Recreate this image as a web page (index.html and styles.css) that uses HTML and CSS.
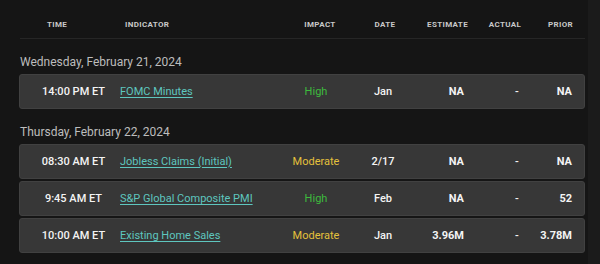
FILE: index.html
```html
<!DOCTYPE html>
<html>
<head>
<meta charset="utf-8">
<link rel="stylesheet" href="styles.css">
</head>
<body>
<div class="page">
  <div class="cal">
    <div class="head">
      <div class="h-time">Time</div>
      <div class="h-ind">Indicator</div>
      <div class="h-imp">Impact</div>
      <div class="h-date">Date</div>
      <div class="h-est">Estimate</div>
      <div class="h-act">Actual</div>
      <div class="h-pri">Prior</div>
    </div>

    <div class="day">Wednesday, February 21, 2024</div>
    <div class="row">
      <div class="c-time">14:00 PM ET</div>
      <div class="c-ind"><a href="#">FOMC Minutes</a></div>
      <div class="c-imp high">High</div>
      <div class="c-date">Jan</div>
      <div class="c-est">NA</div>
      <div class="c-act">-</div>
      <div class="c-pri">NA</div>
    </div>

    <div class="day">Thursday, February 22, 2024</div>
    <div class="row">
      <div class="c-time">08:30 AM ET</div>
      <div class="c-ind"><a href="#">Jobless Claims (Initial)</a></div>
      <div class="c-imp mod">Moderate</div>
      <div class="c-date">2/17</div>
      <div class="c-est">NA</div>
      <div class="c-act">-</div>
      <div class="c-pri">NA</div>
    </div>
    <div class="row">
      <div class="c-time">9:45 AM ET</div>
      <div class="c-ind"><a href="#">S&amp;P Global Composite PMI</a></div>
      <div class="c-imp high">High</div>
      <div class="c-date">Feb</div>
      <div class="c-est">NA</div>
      <div class="c-act">-</div>
      <div class="c-pri">52</div>
    </div>
    <div class="row">
      <div class="c-time">10:00 AM ET</div>
      <div class="c-ind"><a href="#">Existing Home Sales</a></div>
      <div class="c-imp mod">Moderate</div>
      <div class="c-date">Jan</div>
      <div class="c-est">3.96M</div>
      <div class="c-act">-</div>
      <div class="c-pri">3.78M</div>
    </div>
  </div>
  <div class="track"></div>
</div>
</body>
</html>
```

FILE: styles.css
```css
html, body {
  margin: 0;
  padding: 0;
  background: #151515;
  font-family: Roboto, "Liberation Sans", sans-serif;
}
.page {
  display: flex;
  width: 600px;
  height: 264px;
  overflow: hidden;
}
.cal {
  width: 566px;
  margin-left: 19px;
}
.track {
  flex: 1;
  background: #1b1b1b;
  margin-left: 3px;
}
.head {
  display: grid;
  grid-template-columns: 74px 183px 86px 44px 66px 64px 49px;
  height: 39px;
  box-sizing: border-box;
  padding-top: 18px;
  border-bottom: 1px solid #262626;
  margin-left: 1px;
  margin-bottom: 2px;
  font-size: 8px;
  font-weight: 700;
  letter-spacing: 0.35px;
  text-transform: uppercase;
  color: #c8c8c8;
  line-height: 14px;
}
.h-time, .h-imp, .h-date, .h-act { text-align: center; }
.h-ind { padding-left: 31px; }
.h-est { text-align: right; padding-right: 5px; }
.h-pri { text-align: right; padding-right: 13px; }

.day {
  padding: 13px 0 4px 1px;
  font-size: 12px;
  line-height: 16px;
  color: #bdbdbd;
}
.row {
  display: grid;
  grid-template-columns: 100px 156px 80px 54px 54px 66px 54px;
  align-items: center;
  height: 35px;
  box-sizing: border-box;
  margin-bottom: 2px;
  background: #373737;
  border: 1px solid #414141;
  border-radius: 3px;
  font-size: 11px;
  font-weight: 500;
  color: #f4f4f4;
}
.c-time { text-align: center; padding-left: 7px; }
.c-ind a {
  color: #5ec6bf;
  font-weight: 400;
  text-decoration: underline;
  text-underline-offset: 2px;
}
.c-imp, .c-date { text-align: center; }
.c-imp { font-weight: 400; }
.high { color: #3dbb3d; }
.mod { color: #e4c03c; }
.c-est { text-align: right; font-weight: 700; }
.c-act { padding-left: 51px; }
.c-pri { text-align: right; padding-right: 12px; font-weight: 700; }
```
